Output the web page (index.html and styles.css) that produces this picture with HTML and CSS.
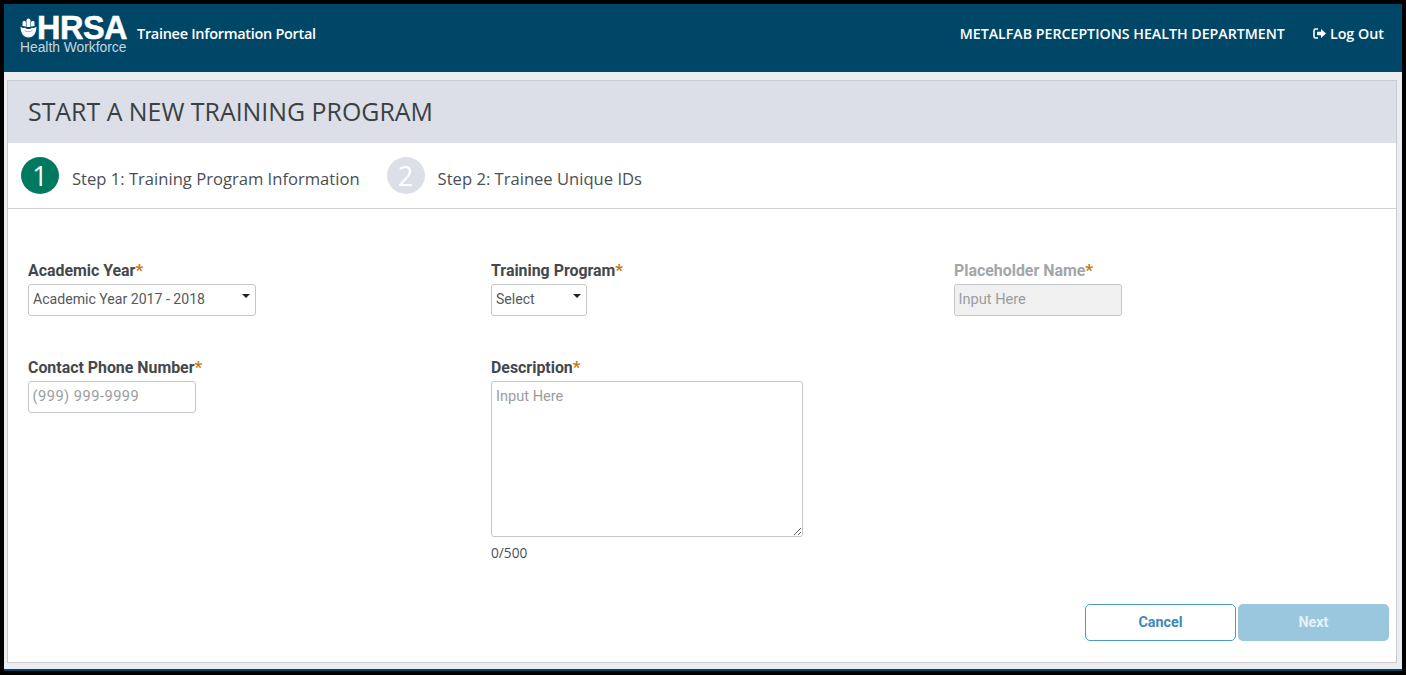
FILE: index.html
```html
<!DOCTYPE html>
<html lang="en">
<head>
    <meta charset="UTF-8">
    <meta name="viewport" content="width=device-width, initial-scale=1.0">
    <title>Start a New Training Program</title>
    <link rel="stylesheet" href="styles.css">
</head>
<body>
    <div class="app">
        <header class="topbar">
            <div class="logo">
                <div class="logo-top">
                    <svg class="logo-mark" width="17" height="20" viewBox="0 0 17 20">
                        <path d="M0.500 8.500C0.500 15 3.500 19.500 8.500 19.500S16.500 15 16.500 8.500C15 10 13 10.500 12 9.500 10.500 11.500 6.500 11.500 5 9.500 4 10.500 2 10 0.500 8.500z" fill="#fff"/>
                        <path d="M6.500 9V2.500a2 2 0 0 1 4 0V9z" fill="#fff"/>
                        <path d="M2.500 8V4.500a1.700 1.700 0 0 1 3.400 0v4z" fill="#fff"/>
                        <path d="M11.100 8.500v-4a1.700 1.700 0 0 1 3.400 0V8z" fill="#fff"/>
                        <path d="M4.500 12.500c2.500 1.500 5.500 1.500 8 0" fill="none" stroke="#7f9fb2" stroke-width="0.800"/>
                    </svg>
                    <span class="logo-name">HRSA</span>
                </div>
                <div class="logo-sub">Health Workforce</div>
            </div>
            <div class="portal-name">Trainee Information Portal</div>
            <div class="org-name">METALFAB PERCEPTIONS HEALTH DEPARTMENT</div>
            <a class="logout" href="#">
                <svg width="13" height="11" viewBox="0 0 13 11">
                    <path d="M5 1H2.500A1.500 1.500 0 0 0 1 2.500v6A1.500 1.500 0 0 0 2.500 10H5" fill="none" stroke="#fff" stroke-width="1.600"/>
                    <path d="M4 3.800h4V1l5 4.500L8 10V7.200H4z" fill="#fff"/>
                </svg>
                Log Out
            </a>
        </header>

        <main class="content">
            <section class="panel">
                <h1 class="panel-title">START A NEW TRAINING PROGRAM</h1>

                <div class="steps">
                    <div class="step">
                        <span class="step-num active">1</span>
                        <span class="step-text">Step 1: Training Program Information</span>
                    </div>
                    <div class="step">
                        <span class="step-num">2</span>
                        <span class="step-text">Step 2: Trainee Unique IDs</span>
                    </div>
                </div>

                <form class="form">
                    <div class="form-grid">
                        <div class="form-group row-one">
                            <label for="year">Academic Year<span class="req">*</span></label>
                            <div class="select-box wide">
                                <select id="year">
                                    <option>Academic Year 2017 - 2018</option>
                                </select>
                            </div>
                        </div>
                        <div class="form-group row-one">
                            <label for="program">Training Program<span class="req">*</span></label>
                            <div class="select-box narrow">
                                <select id="program">
                                    <option>Select</option>
                                </select>
                            </div>
                        </div>
                        <div class="form-group row-one disabled">
                            <label for="placeholder">Placeholder Name<span class="req">*</span></label>
                            <input type="text" id="placeholder" placeholder="Input Here" disabled>
                        </div>
                        <div class="form-group">
                            <label for="phone">Contact Phone Number<span class="req">*</span></label>
                            <input type="text" id="phone" class="phone" placeholder="(999) 999-9999">
                        </div>
                        <div class="form-group">
                            <label for="description">Description<span class="req">*</span></label>
                            <textarea id="description" placeholder="Input Here"></textarea>
                            <div class="counter">0/500</div>
                        </div>
                    </div>
                    <div class="actions">
                        <button type="button" class="btn btn-outline">Cancel</button>
                        <button type="button" class="btn btn-primary">Next</button>
                    </div>
                </form>
            </section>
        </main>
    </div>
</body>
</html>
```

FILE: styles.css
```css
* {
    box-sizing: border-box;
}
body {
    margin: 0;
    height: 675px;
    overflow: hidden;
    background-color: #000;
    padding: 4px 4px 4px 4px;
    font-family: "Open Sans", Arial, sans-serif;
}
.app {
    height: 667px;
    display: flex;
    flex-direction: column;
    background-color: #ebedf0;
    border-bottom: 2px solid #004767;
}
.topbar {
    height: 68px;
    flex-shrink: 0;
    display: flex;
    align-items: center;
    padding: 0 18px 9px 16px;
    background-color: #004767;
    color: #fff;
}
.logo {
    width: 107px;
    padding-top: 2px;
    color: #fff;
    font-family: "Liberation Sans", Arial, sans-serif;
}
.logo-top {
    display: flex;
    align-items: center;
    height: 26px;
}
.logo-mark {
    flex-shrink: 0;
}
.logo-name {
    font-size: 32.500px;
    font-weight: bold;
    letter-spacing: -0.500px;
    line-height: 26px;
    -webkit-text-stroke: 0.500px #fff;
}
.logo-sub {
    font-size: 13.800px;
    line-height: 13px;
    color: #c9d6df;
}
.portal-name {
    margin-left: 10px;
    font-size: 14.500px;
    font-weight: 600;
    letter-spacing: -0.300px;
}
.org-name {
    margin-left: auto;
    font-size: 14.200px;
    font-weight: 600;
}
.logout {
    margin-left: 28px;
    display: flex;
    align-items: center;
    gap: 4px;
    color: #fff;
    font-size: 14.300px;
    font-weight: 600;
    text-decoration: none;
}
.content {
    flex: 1;
    padding: 8px 5px 6px 3px;
}
.panel {
    height: 100%;
    display: flex;
    flex-direction: column;
    background-color: #fff;
    border: 1px solid #c9ccd1;
}
.panel-title {
    margin: 0;
    height: 62px;
    flex-shrink: 0;
    padding-left: 20px;
    background-color: #dcdfe8;
    color: #3a3f44;
    font-size: 24.900px;
    font-weight: 400;
    line-height: 60px;
}
.steps {
    height: 66px;
    flex-shrink: 0;
    display: flex;
    align-items: center;
    gap: 27px;
    padding: 0 0 0 13px;
    border-bottom: 1px solid #cfd3d6;
}
.step {
    display: flex;
    align-items: center;
    gap: 13px;
}
.step-num {
    width: 38px;
    height: 37px;
    display: flex;
    align-items: center;
    justify-content: center;
    border-radius: 50%;
    background-color: #dcdfe8;
    color: #fff;
    font-size: 27px;
    line-height: 1;
}
.step-num.active {
    background-color: #007a5e;
}
.step-text {
    color: #4b4f54;
    font-size: 16.600px;
    padding-top: 5px;
}
.form {
    flex: 1;
    display: flex;
    flex-direction: column;
    justify-content: space-between;
    padding: 53px 7px 21px 20px;
    font-family: Roboto, Arial, sans-serif;
}
.form-grid {
    display: grid;
    grid-template-columns: 463px 463px 1fr;
    align-items: start;
}
.form-group label {
    display: block;
    height: 22px;
    color: #44484d;
    font-size: 15.900px;
    font-weight: 700;
    line-height: 16px;
}
.row-one {
    height: 97px;
}
.req {
    color: #c77a14;
    font-size: 17px;
}
.select-box {
    position: relative;
    height: 32px;
}
.select-box.wide {
    width: 228px;
}
.select-box.narrow {
    width: 96px;
}
.select-box::after {
    content: "";
    position: absolute;
    top: 10px;
    right: 6px;
    border-left: 4.500px solid transparent;
    border-right: 4.500px solid transparent;
    border-top: 4.500px solid #222;
}
select,
input[type="text"],
textarea {
    display: block;
    border: 1px solid #c4c7c9;
    border-radius: 3px;
    background-color: #fff;
    color: #55595e;
    font-family: Roboto, Arial, sans-serif;
    font-size: 14.100px;
    outline: none;
}
select {
    width: 100%;
    height: 32px;
    padding: 0 4px 2px;
    appearance: none;
}
input[type="text"] {
    width: 168px;
    height: 32px;
    padding: 0 4px 2px 3.500px;
    font-size: 14.600px;
}
input.phone {
    letter-spacing: 0.500px;
}
textarea {
    width: 312px;
    height: 156px;
    padding: 5px 4px;
    font-size: 14.600px;
    resize: both;
}
::placeholder {
    color: #9a9da0;
    opacity: 1;
}
.disabled label {
    color: #a3a6a9;
}
.disabled input[type="text"] {
    background-color: #f0f0f0;
}
.counter {
    margin-top: 6px;
    color: #4b4f54;
    font-family: "Open Sans", Arial, sans-serif;
    font-size: 13.700px;
}
.actions {
    display: flex;
    justify-content: flex-end;
    gap: 2px;
}
.btn {
    width: 151px;
    height: 37px;
    padding-bottom: 3px;
    border-radius: 5px;
    font-family: Roboto, Arial, sans-serif;
    font-size: 14.300px;
    font-weight: 700;
    cursor: pointer;
}
.btn-outline {
    border: 1.500px solid #4a9bc9;
    background-color: #fff;
    color: #3f88b8;
}
.btn-primary {
    border: none;
    background-color: #9bc7de;
    color: #e6f1f6;
}
```
